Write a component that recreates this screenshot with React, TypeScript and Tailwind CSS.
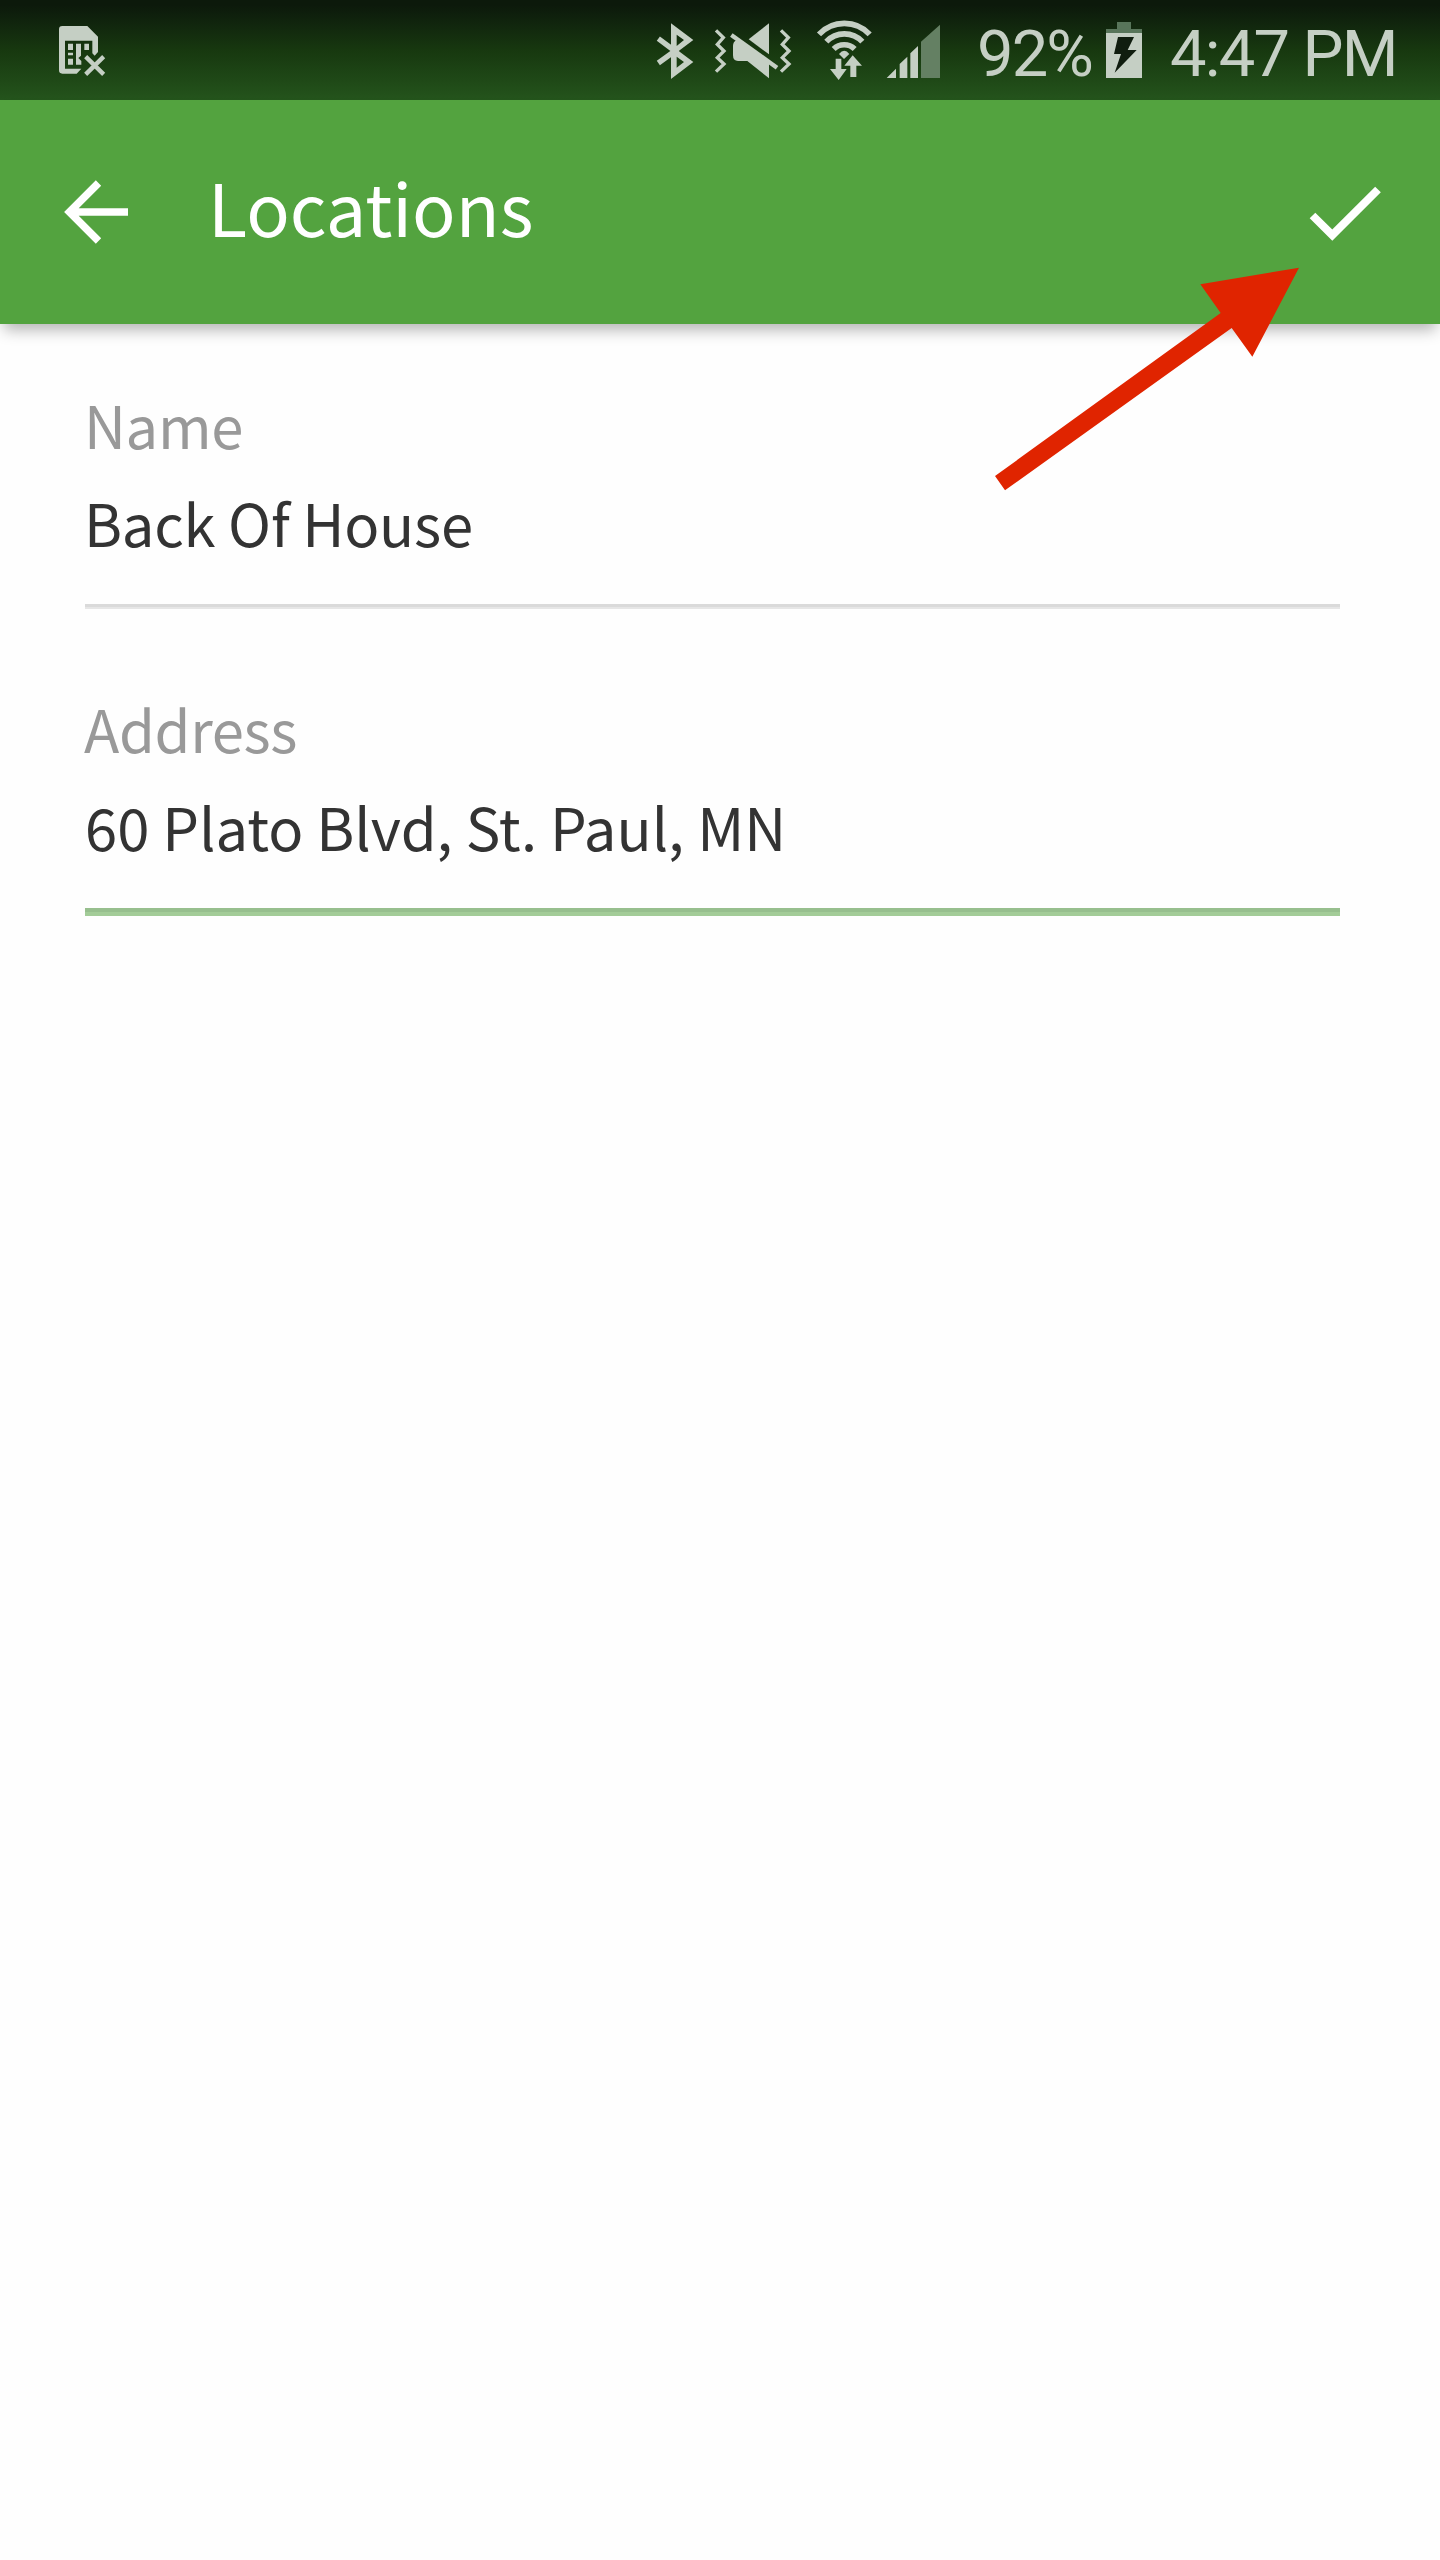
type FieldProps = { label: string; value: string; active?: boolean };

function Field({ label, value, active }: FieldProps) {
  return (
    <div className="flex h-[304px] flex-col">
      <label className="-ml-px h-[60px] whitespace-nowrap text-[58px] leading-[60px] tracking-[-0.35px] text-[#999999]">{label}</label>
      {active ? (
        <>
          <div className="mt-[38px] h-[60px] whitespace-nowrap text-[58px] leading-[60px] tracking-[-0.03px] text-[#333333]">{value}</div>
          <div className="mt-[52px] h-2 border-b-4 border-[#a3cc98] bg-[#97bf8e]" />
        </>
      ) : (
        <>
          <div className="-ml-px mt-[38px] h-[60px] whitespace-nowrap text-[58px] leading-[60px] tracking-[-0.25px] text-[#333333]">{value}</div>
          <div className="mt-[52px] h-[5px] border-b-2 border-[#e6e6e6] bg-[#dadada]" />
        </>
      )}
    </div>
  );
}

function SimIcon() {
  return (
    <svg className="ml-[57px] h-[100px] w-[50px] shrink-0" viewBox="51 0 150 300" fill="#c5cfc4">
      <path
        fillRule="evenodd"
        d="M67 78H142L174 110V156L164 167L157 160V122H75V206H124L110 221H67Q57 221 57 211V88Q57 78 67 78Z"
      />
      <path d="M84 131h15v19h-15zM84 158h15v8h-15zM84 176h15v18h-15zM108 131h15v36l-8 7 9 9v11h-16zM133 131h14v19h-14z" />
      <path d="M137 170L191 223M191 170L137 223" stroke="#c5cfc4" strokeWidth="13" />
    </svg>
  );
}

function BluetoothIcon() {
  return (
    <svg className="h-[100px] w-10 shrink-0" viewBox="45 0 120 300" fill="#c5cfc4">
      <path fillRule="evenodd" d="M93 70L160 120L116 153L160 186L93 237ZM110 104V138L132 120ZM110 170V203L132 186Z" />
      <path d="M55 116L105 153L55 189" fill="none" stroke="#c5cfc4" strokeWidth="16" />
    </svg>
  );
}

function VibrateIcon() {
  return (
    <svg className="ml-[17px] h-[100px] w-[80px] shrink-0" viewBox="216 0 240 300" fill="#c5cfc4">
      <g fill="none" stroke="#c5cfc4" strokeWidth="10">
        <path d="M228 91L250 113L232 133L252 153L232 173L252 192L228 215" />
        <path d="M423 91L445 113L427 133L447 153L427 173L447 192L423 215" />
        <path d="M274 105L411 203" strokeWidth="13" />
      </g>
      <path d="M387 70L326 118L387 163Z" />
      <path d="M290 121L387 190V235L322 183H294Q279 183 279 166V138Q279 125 290 121Z" />
    </svg>
  );
}

function WifiIcon() {
  return (
    <svg className="ml-[24px] h-[100px] w-[56px] shrink-0" viewBox="48 0 168 300" fill="#c5cfc4">
      <g fill="none" stroke="#c5cfc4" strokeWidth="17">
        <path d="M57 103A104 104 0 0 1 209 103" />
        <path d="M79 125A74 74 0 0 1 187 125" />
        <path d="M101 147A45 45 0 0 1 164 147" />
      </g>
      <path d="M117 162Q133 143 148 162L132 177Z" />
      <path d="M107 176h17v31h16L116 240L90 207h17zM158 166L186 197H169V231H151V197H133Z" />
    </svg>
  );
}

function SignalIcon() {
  return (
    <svg className="ml-[14px] h-[100px] w-[56px] shrink-0" viewBox="258 0 168 300" fill="#c5cfc4">
      <path d="M260 234H288V206ZM299 234H322V170L299 192ZM331 234H354V138L331 160Z" />
      <path d="M363 234H420V74L363 125Z" fill="#648063" />
    </svg>
  );
}

function BatteryIcon() {
  return (
    <svg className="h-[100px] w-[36px] shrink-0" viewBox="438 0 108 300" fill="#c5cfc4">
      <path d="M471 66h42v21h33v12h-108v-12h33z" fill="#58755a" />
      <path d="M438 99h108v135h-108z" />
      <path d="M474 111H522L503 150H530L464 218L483 162H462Z" fill="#101d0f" />
    </svg>
  );
}

export default function App() {
  return (
    <div className="relative flex h-[2560px] w-[1440px] flex-col overflow-hidden bg-[#fefefe] font-['Noto_Sans_CJK_SC',sans-serif]">
      <div className="flex h-[100px] shrink-0 items-start bg-linear-to-b from-[#0c190b] from-5% via-[#17380f] via-50% to-[#24541c] font-[Roboto,sans-serif] text-[65px] leading-[100px] text-[#c5cfc4]">
        <SimIcon />
        <div className="ml-[548px] flex">
          <BluetoothIcon />
          <VibrateIcon />
          <WifiIcon />
          <SignalIcon />
        </div>
        <div className="ml-[35px] mt-[4px] w-[129px] whitespace-nowrap tracking-[-1.9px]">92%</div>
        <BatteryIcon />
        <div className="ml-[28px] mt-[4px] whitespace-nowrap tracking-[-1.8px]">4:47 PM</div>
      </div>
      <header className="flex h-[224px] shrink-0 items-start bg-[#53a33f] shadow-[0_10px_14px_-4px_rgba(0,0,0,0.29)]">
        <svg className="ml-[60px] mt-[76px] size-[72px] shrink-0" viewBox="0 0 72 72" fill="none" stroke="#fff" strokeWidth="7.6">
          <path d="M38.500 7L9.500 36L38.500 65M10 36H68" />
        </svg>
        <h1 className="ml-[76px] mt-[70px] whitespace-nowrap text-[72px] leading-[72px] text-white">Locations</h1>
        <svg className="ml-auto mr-[50px] mt-[77px] h-[72px] w-[90px] shrink-0" viewBox="1300 177 90 72" fill="none" stroke="#fff" strokeWidth="8">
          <path d="M1312.500 215.500L1332.300 235L1378 189.500" />
        </svg>
      </header>
      <main className="flex flex-col pl-[85px] pr-[100px] pt-[70px]">
        <Field label="Name" value="Back Of House" />
        <Field label="Address" value="60 Plato Blvd, St. Paul, MN" active />
      </main>
      <svg className="absolute left-[960px] top-[250px] h-[260px] w-[360px]" viewBox="0 300 1080 780" fill="#e02400">
        <path d="M1017 353L877 620L815 534L135 1021L105 978L782 489L721 403Z" />
      </svg>
    </div>
  );
}
